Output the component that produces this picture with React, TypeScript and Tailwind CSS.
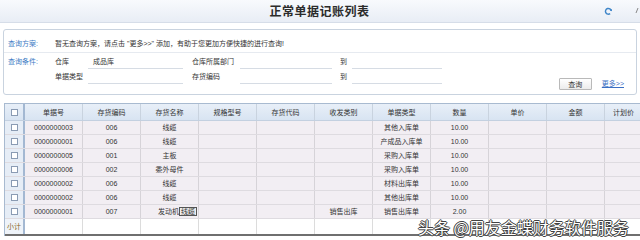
import React from "react";

const rows: string[][] = [
  ["0000000003", "006", "线缆", "", "", "", "其他入库单", "10.00"],
  ["0000000001", "006", "线缆", "", "", "", "产成品入库单", "10.00"],
  ["0000000005", "001", "主板", "", "", "", "采购入库单", "10.00"],
  ["0000000006", "002", "委外母件", "", "", "", "采购入库单", "10.00"],
  ["0000000002", "006", "线缆", "", "", "", "材料出库单", "10.00"],
  ["0000000002", "006", "线缆", "", "", "", "其他出库单", "10.00"],
  ["0000000001", "007", "发动机", "", "", "销售出库", "销售出库单", "2.00"],
];

const headers = ["单据号", "存货编码", "存货名称", "规格型号", "存货代码", "收发类别", "单据类型", "数量", "单价", "金额"];

function Checkbox() {
  return <div className="w-[7px] h-[7px] border border-[#8a9bb3] bg-white" />;
}

export default function App() {
  return (
    <div
      className="relative w-[640px] h-[240px] overflow-hidden bg-white text-[#333] text-[7px] leading-[9px]"
      style={{ fontFamily: '"Liberation Sans", "Noto Sans CJK SC", sans-serif' }}
    >
      {/* title bar */}
      <div className="h-[23px] flex items-center border-b border-[#d6dde8] bg-gradient-to-b from-[#f8fafd] to-[#e8edf5]">
        <div className="flex-1" />
        <div className="text-[12px] leading-[14px] font-bold text-[#2b2b2b] tracking-[0.5px]" style={{ fontFamily: '"Noto Sans CJK SC", sans-serif' }}>
          正常单据记账列表
        </div>
        <div className="flex-1 flex justify-end items-center gap-[22px] pr-[1px]">
          <svg width="9" height="9" viewBox="0 0 10 10">
            <path d="M8 4.5A3.2 3.2 0 1 0 6.8 7.3" fill="none" stroke="#3f86c9" strokeWidth="1.6" />
            <path d="M6.2 3.2L8.6 2.2L8.9 4.8Z" fill="#3f86c9" />
          </svg>
          <svg width="4" height="8" viewBox="0 0 4 8">
            <path d="M3 1L1 6" stroke="#888" strokeWidth="1" />
          </svg>
        </div>
      </div>

      {/* query panel */}
      <div className="mx-[3px] mt-[6px] h-[66px] border border-[#c9d3df] rounded-[3px] flex flex-col">
        <div className="h-[23px] pt-[4px] border-b border-[#e6eaf0] flex items-center pl-[4px]">
          <span className="w-[47px] text-[#3b7bc4]">查询方案:</span>
          <span>暂无查询方案，请点击 "更多&gt;&gt;" 添加，有助于您更加方便快捷的进行查询!</span>
        </div>
        <div className="flex-1 flex pl-[4px]">
          <div className="w-[47px] h-[15px] mt-[1px] flex items-center text-[#3b7bc4]">查询条件:</div>
          <div className="flex flex-col pt-[1px]">
            <div className="flex h-[15px]">
              <div className="w-[33px] flex items-center">仓库</div>
              <div className="w-[95px] border-b border-[#d6dce4] flex items-center pl-[5px]">成品库</div>
              <div className="w-[9px]" />
              <div className="w-[48px] flex items-center">仓库所属部门</div>
              <div className="w-[92px] border-b border-[#d6dce4]" />
              <div className="w-[8px]" />
              <div className="w-[12px] flex items-center">到</div>
              <div className="w-[90px] border-b border-[#d6dce4]" />
            </div>
            <div className="flex h-[15px]">
              <div className="w-[33px] flex items-center">单据类型</div>
              <div className="w-[95px] border-b border-[#d6dce4]" />
              <div className="w-[9px]" />
              <div className="w-[48px] flex items-center">存货编码</div>
              <div className="w-[92px] border-b border-[#d6dce4]" />
              <div className="w-[8px]" />
              <div className="w-[12px] flex items-center">到</div>
              <div className="w-[90px] border-b border-[#d6dce4]" />
            </div>
          </div>
          <div className="ml-auto self-end mb-[4px] pr-[12px] flex items-center gap-[10px]">
            <div className="w-[33px] h-[12px] border border-[#b9b9b9] rounded-[1px] bg-gradient-to-b from-white to-[#ececec] flex items-center justify-center">
              查询
            </div>
            <span className="text-[#3a6fc4] underline mb-[2px]">更多&gt;&gt;</span>
          </div>
        </div>
      </div>

      {/* table */}
      <div className="mt-[8px] ml-[4px] w-[700px] border-l border-t border-[#a8bad0]">
        <div className="flex h-[17px] bg-gradient-to-b from-[#e8eff8] to-[#d8e4f2] border-b border-[#c3d0e0]">
          <div className="w-[20px] shrink-0 flex items-center justify-center border-r-2 border-[#a3b8d2]">
            <Checkbox />
          </div>
          {headers.map((h, i) => (
            <div key={i} className="w-[58px] shrink-0 flex items-center justify-center border-r border-[#c9d3df]">
              {h}
            </div>
          ))}
          <div className="w-[58px] shrink-0 flex items-center pl-[8px] border-r border-[#c9d3df]">计划价</div>
        </div>
        {rows.map((r, ri) => (
          <div key={ri} className="flex h-[14px] bg-[#f2eef3] border-b border-[#dedbe0]">
            <div className="w-[20px] shrink-0 flex items-center justify-center bg-[#e6edf6] border-r-2 border-[#a3b8d2]">
              <Checkbox />
            </div>
            {Array.from({ length: 11 }).map((_, ci) => {
              const v = r[ci] ?? "";
              if (ri === 6 && ci === 2) {
                return (
                  <div key={ci} className="w-[58px] shrink-0 flex items-center pl-[17px] border-r border-[#d6d3d8]">
                    <span>发动机</span>
                    <span className="border border-[#555] bg-[#eee] px-[1px] leading-[7px]">线缆</span>
                  </div>
                );
              }
              return (
                <div key={ci} className="w-[58px] shrink-0 flex items-center justify-center border-r border-[#d6d3d8]">
                  {v}
                </div>
              );
            })}
          </div>
        ))}
        <div className="flex h-[17px] bg-white border-b-2 border-[#6f6f6f]">
          <div className="w-[20px] shrink-0 flex items-center justify-center bg-[#eef3f9] border-r-2 border-[#a3b8d2] text-[#8a6a22]">
            小计
          </div>
          {Array.from({ length: 11 }).map((_, ci) => (
            <div key={ci} className="w-[58px] shrink-0 border-r border-[#dcdcdc]" />
          ))}
        </div>
      </div>

      {/* watermark */}
      <div
        className="absolute left-[418px] top-[217px] text-[16px] leading-[20px] text-white whitespace-nowrap [text-shadow:0_0_1px_#333,1px_0_0_#444,-1px_0_0_#444,0_1px_0_#444,0_-1px_0_#444]"
        style={{ fontFamily: '"Noto Sans CJK SC", sans-serif' }}
      >
        头条 @用友金蝶财务软件服务
      </div>
    </div>
  );
}
